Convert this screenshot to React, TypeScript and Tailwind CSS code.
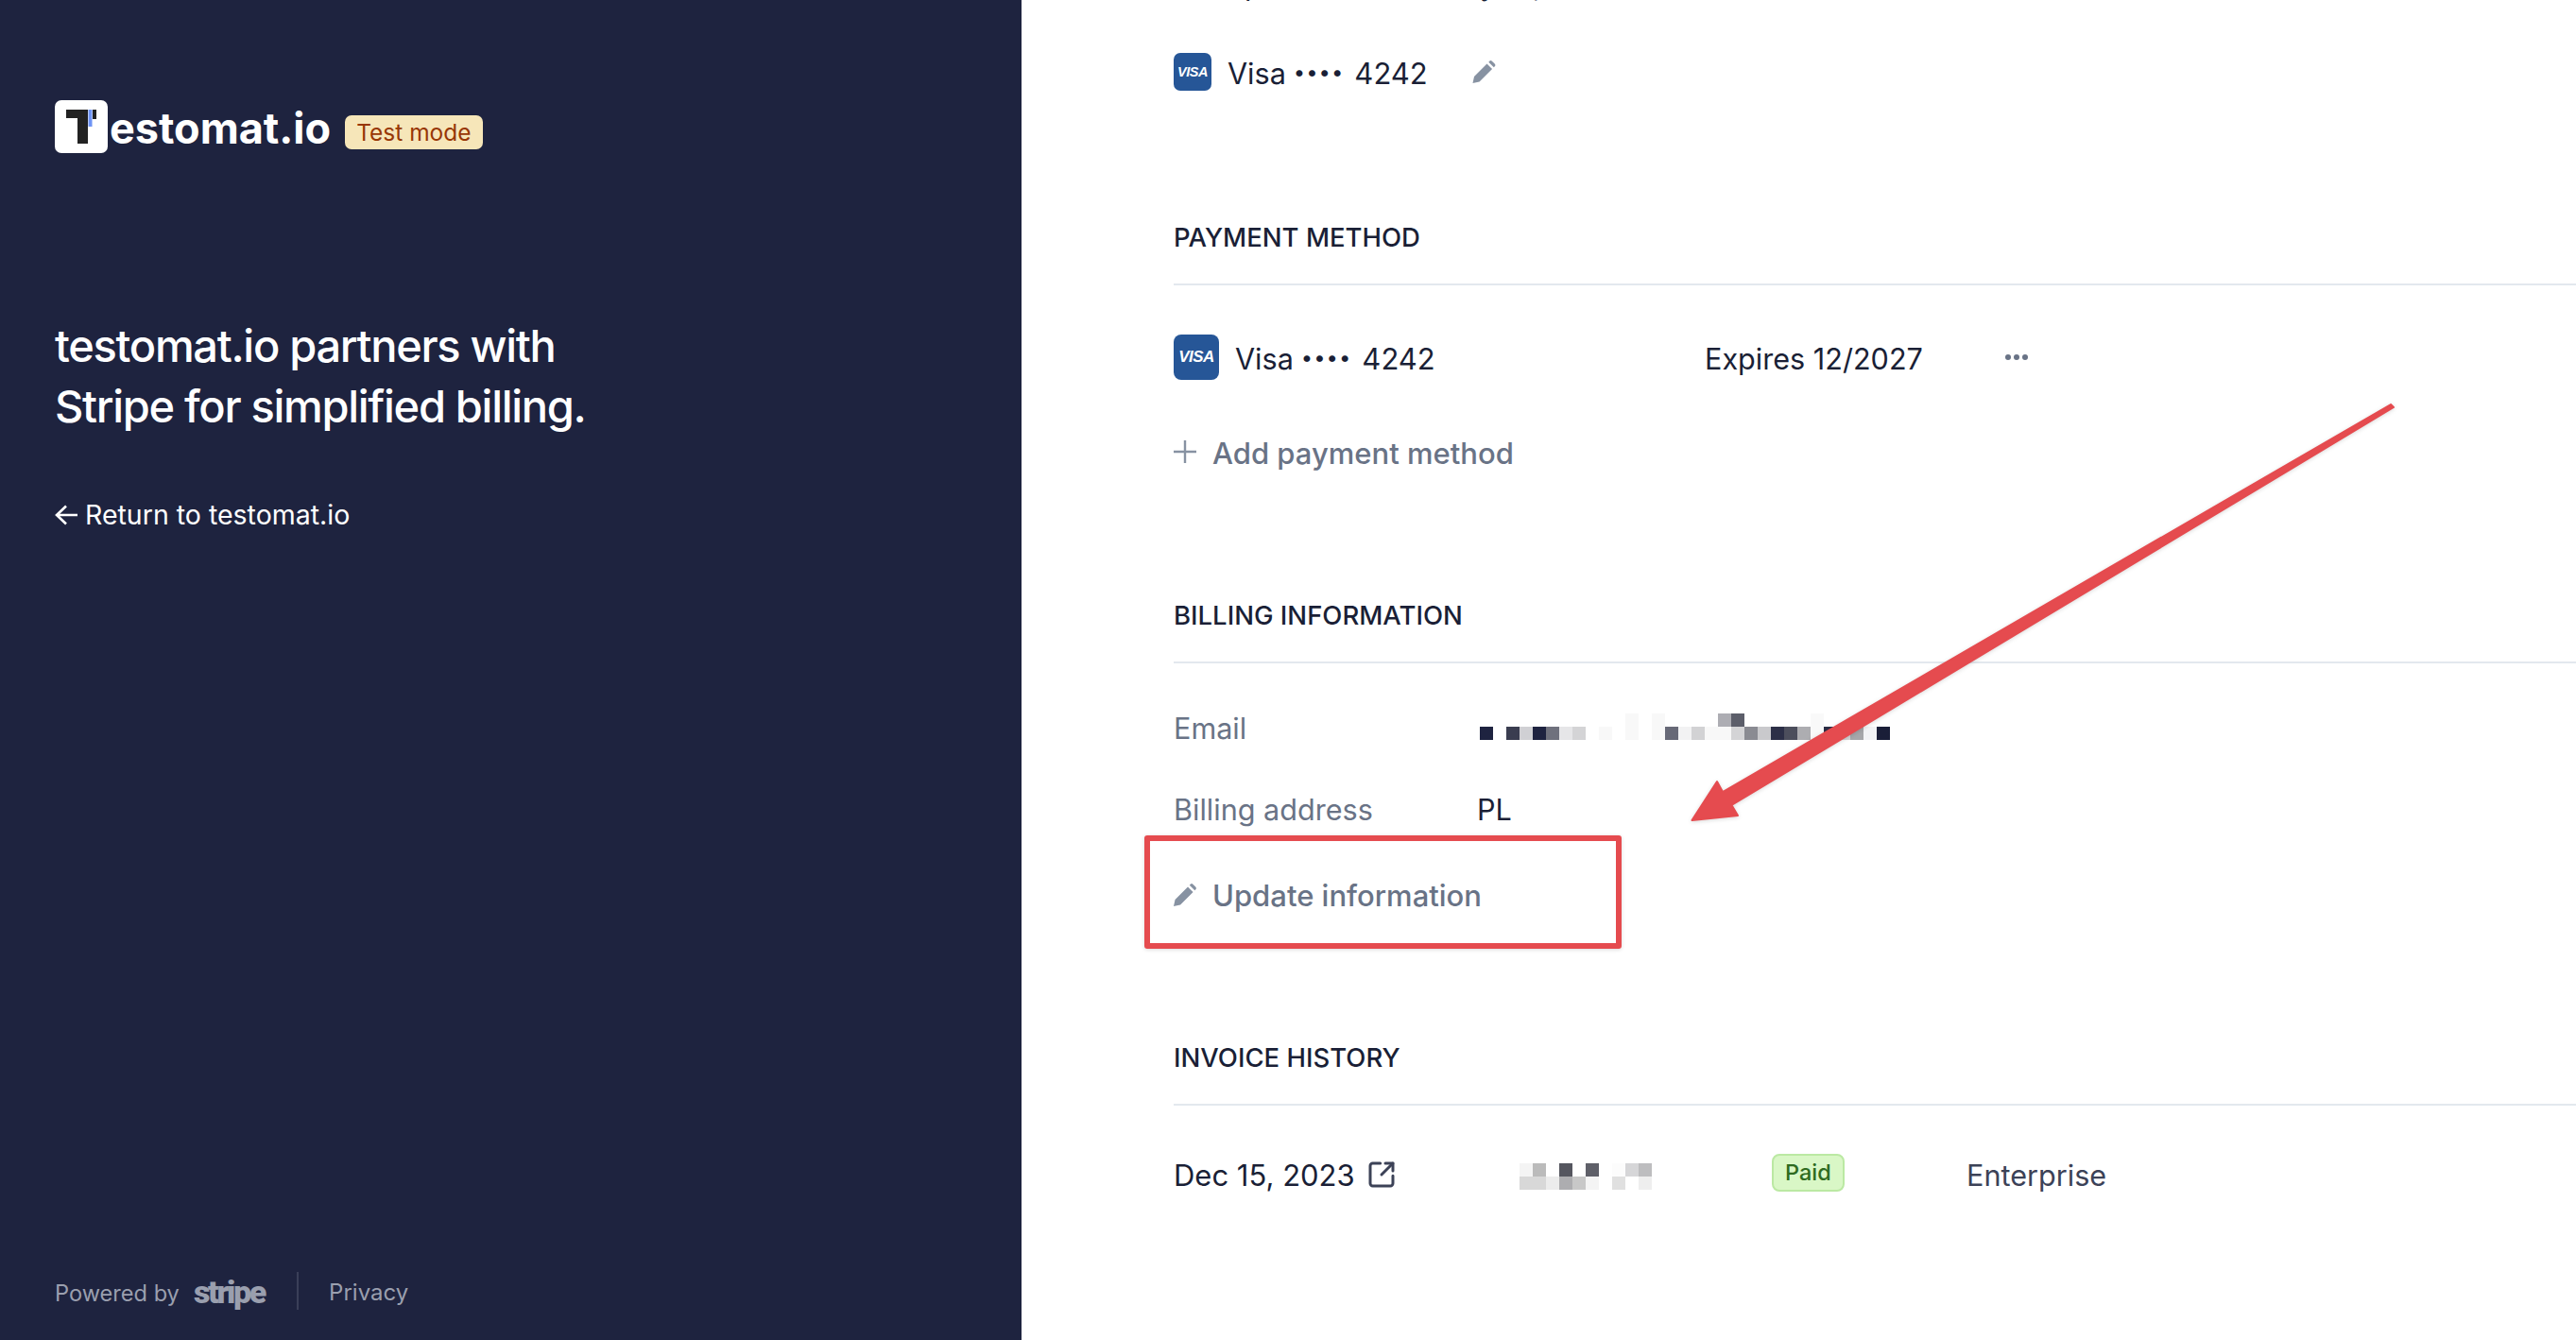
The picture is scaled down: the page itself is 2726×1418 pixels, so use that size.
import React from 'react';
import { SquareArrowOutUpRight } from 'lucide-react';

const EMAIL_TOP = [
  'transparent', 'transparent', 'transparent', 'transparent', 'transparent', 'transparent', 'transparent', 'transparent',
  'transparent', 'transparent', 'transparent', '#f8f8f8', 'transparent', '#f8f8f8', 'transparent', 'transparent',
  'transparent', 'transparent', '#adadb3', '#5c5e6a', 'transparent', 'transparent', 'transparent', 'transparent',
  'transparent', '#f9f9f9', 'transparent', 'transparent', 'transparent', 'transparent', 'transparent',
];

const EMAIL_BOTTOM = [
  '#1e2340', 'transparent', '#3a3d50', '#d0d0d4', '#1e2340', '#6f717d', '#e6e6e8', '#d4d4d6',
  'transparent', '#f8f8f8', 'transparent', '#f8f8f8', 'transparent', '#f8f8f8', '#676977', '#f2f2f3',
  '#d2d2d4', '#f8f8f8', '#f8f8f8', '#d4d4d6', '#8a8b92', '#c9c9cc', '#2c2f47', '#4c4e5c',
  '#adadb1', '#f9f9f9', '#2c2f47', '#d4d4d6', '#a6a7aa', '#f2f3f5', '#1a1e38',
];

const AMOUNT_TOP = ['#f4f4f4', '#bbbbbb', 'transparent', '#55565f', 'transparent', '#5f6069', 'transparent', '#fcfcfc', '#d6d6d8', '#bdbdbf'];
const AMOUNT_BOTTOM = ['#d8d8d8', '#d8d8d8', '#ececec', '#adadb0', '#c8c8c8', '#f4f4f4', 'transparent', '#e0e0e0', 'transparent', '#eeeeee'];

const Mosaic: React.FC<{ rows: string[][] }> = ({ rows }) => (
  <div className="flex flex-col">
    {rows.map((row, i) => (
      <div key={i} className="flex">
        {row.map((color, j) => (
          <span key={j} className="block w-[14px] h-[14px]" style={{ background: color }} />
        ))}
      </div>
    ))}
  </div>
);

const VisaIcon: React.FC<{ large?: boolean }> = ({ large }) => (
  <span
    className={`flex items-center justify-center shrink-0 bg-[#265697] text-white italic font-bold tracking-[-0.5px] font-['Liberation_Sans',sans-serif] ${
      large ? 'w-[48px] h-[48px] rounded-[8px] text-[17px]' : 'w-[40px] h-[40px] rounded-[7px] text-[14.5px]'
    }`}
  >
    VISA
  </span>
);

const CardNumber: React.FC = () => (
  <span className="flex items-center pt-[4px]">
    Visa
    <span className="ml-[8px] -mt-[4px] text-[22px] tracking-[1px]">••••</span>
    <span className="ml-[11px] text-[31px]">4242</span>
  </span>
);

const Pencil: React.FC<{ className?: string }> = ({ className }) => (
  <svg viewBox="0 0 16 16" className={className} fill="currentColor">
    <path d="M0 16l1-4.7L10 2.3l3.7 3.7-9 9L0 16z" />
    <path d="M11.2 1.1l.6-.6a1.3 1.3 0 0 1 1.8 0l1.9 1.9a1.3 1.3 0 0 1 0 1.8l-.6.6-3.7-3.7z" />
  </svg>
);

const SectionTitle: React.FC<{ title: string; className: string }> = ({ title, className }) => (
  <div className={`${className} h-[72px] pt-[1px] border-b-2 border-[#e3e8ee] text-[27.5px] leading-[40px] font-medium text-[#1a1f36]`}>
    {title}
  </div>
);

export default function App() {
  return (
    <div className="flex h-screen overflow-hidden bg-white font-['Inter',sans-serif]">
      <aside className="flex flex-col justify-between w-[1081px] shrink-0 bg-[#1e233f] pl-[58px] pt-[106px] pb-[32px] text-white">
        <div>
          <div className="flex items-start">
            <span className="block w-[56px] h-[56px] rounded-[7px] bg-white">
              <svg viewBox="0 0 56 56" className="w-[56px] h-[56px]">
                <path d="M12 10h23v36H24V19H12z" fill="#222222" />
                <rect x="35.5" y="10" width="4" height="18" fill="#6f94f5" />
                <rect x="40" y="10" width="4" height="10" fill="#222222" />
              </svg>
            </span>
            <span className="ml-[2px] mt-[2px] text-[45px] leading-[56px] font-bold">estomat.io</span>
            <span className="ml-[15px] mt-[16px] flex items-center h-[36px] px-[12px] rounded-[7px] bg-[#f6e6b9] text-[24.5px] text-[#983705]">
              Test mode
            </span>
          </div>
          <h1 className="mt-[170px] text-[47px] leading-[64px] font-medium tracking-[-1.3px]">
            testomat.io partners with
            <br />
            Stripe for simplified billing.
          </h1>
          <div className="mt-[63px] flex items-center h-[40px] text-[28.5px]">
            <svg viewBox="0 0 24 22" className="w-[24px] h-[22px]" fill="none" stroke="currentColor" strokeWidth="2.6">
              <path d="M2 11h22M12 1.5L2 11l10 9.500" />
            </svg>
            <span className="ml-[8px]">Return to testomat.io</span>
          </div>
        </div>
        <div className="flex items-center h-[40px] text-[23.6px] text-[#9a9fae]">
          <span className="pt-[5px]">Powered by</span>
          <span className="ml-[15px] pt-[2px] text-[34px] font-black font-['Roboto',sans-serif] tracking-[-2.3px]">stripe</span>
          <span className="ml-[34px] w-[2px] h-[40px] bg-[#3a3f58]" />
          <span className="ml-[32px] pt-[4px] text-[24px]">Privacy</span>
        </div>
      </aside>

      <main className="relative flex-1 flex flex-col pl-[161px] text-[30.6px] leading-[40px] text-[#1a1f36]">
        <div className="-mt-[36px] h-[40px] text-[#1a1f36]">Your plan ends January 15, 2024</div>

        <div className="mt-[52px] flex items-center h-[40px]">
          <VisaIcon />
          <span className="ml-[17px]">
            <CardNumber />
          </span>
          <Pencil className="ml-[47px] w-[25px] h-[24px] text-[#8792a2]" />
        </div>

        <SectionTitle title="PAYMENT METHOD" className="mt-[134px]" />
        <div className="mt-[52px] flex items-center h-[48px]">
          <div className="flex items-center w-[562px]">
            <VisaIcon large />
            <span className="ml-[17px]">
              <CardNumber />
            </span>
          </div>
          <span className="w-[318px] pt-[4px]">Expires 12/2027</span>
          <span className="flex gap-[3px]">
            <span className="w-[6px] h-[6px] rounded-full bg-[#697386]" />
            <span className="w-[6px] h-[6px] rounded-full bg-[#697386]" />
            <span className="w-[6px] h-[6px] rounded-full bg-[#697386]" />
          </span>
        </div>
        <div className="mt-[56px] flex items-center h-[40px] text-[31px] font-medium text-[#697386]">
          <svg viewBox="0 0 24 24" className="w-[24px] h-[24px] text-[#8792a2]" fill="none" stroke="currentColor" strokeWidth="2.4">
            <path d="M12 0v24M0 12h24" />
          </svg>
          <span className="ml-[17px] pt-[4px]">Add payment method</span>
        </div>

        <SectionTitle title="BILLING INFORMATION" className="mt-[132px]" />
        <div className="mt-[47px] flex items-center h-[40px]">
          <span className="w-[321px] pt-[4px] text-[#697386]">Email</span>
          <div className="ml-[3px]">
            <Mosaic rows={[EMAIL_TOP, EMAIL_BOTTOM]} />
          </div>
        </div>
        <div className="mt-[46px] flex items-center h-[40px]">
          <span className="w-[321px] pt-[4px] text-[#697386]">Billing address</span>
          <span className="pt-[4px]">PL</span>
        </div>
        <div className="mt-[51px] flex items-center h-[40px] text-[31px] font-medium text-[#697386]">
          <Pencil className="mt-[2px] w-[24px] h-[24px] text-[#8792a2]" />
          <span className="ml-[17px] pt-[4px]">Update information</span>
        </div>

        <SectionTitle title="INVOICE HISTORY" className="mt-[132px]" />
        <div className="mt-[52px] flex items-start h-[40px]">
          <div className="flex items-center w-[366px]">
            <span className="pt-[2px] text-[31px]">Dec 15, 2023</span>
            <SquareArrowOutUpRight className="ml-[12px] w-[32px] h-[32px] text-[#3c4257]" strokeWidth={2.25} />
          </div>
          <div className="w-[267px] mt-[9px]">
            <Mosaic rows={[AMOUNT_TOP, AMOUNT_BOTTOM]} />
          </div>
          <div className="w-[206px] -mt-[4px]">
            <span className="inline-flex items-center h-[40px] px-[12px] rounded-[8px] border-2 border-[#bbe9a3] bg-[#d9f7c6] text-[23.5px] font-medium text-[#2e6b1f]">
              Paid
            </span>
          </div>
          <span className="pt-[2px] text-[#3c4257]">Enterprise</span>
        </div>

        <div className="absolute left-[130px] top-[884px] w-[505px] h-[120px] rounded-[3px] border-[6px] border-[#e54b4f] shadow-[0_1px_4px_rgba(0,0,0,0.15)]" />
        <svg className="absolute left-[700px] top-[420px] w-[760px] h-[460px] drop-shadow-[0_1px_2px_rgba(0,0,0,0.15)]" viewBox="0 0 760 460">
          <path
            d="M749 8 L752 11 L51.5 432 L58 443 L9.5 448 L36 407 L42 418 Z"
            fill="#e54b4f"
            stroke="#e54b4f"
            strokeWidth="2"
            strokeLinejoin="round"
          />
        </svg>
      </main>
    </div>
  );
}
